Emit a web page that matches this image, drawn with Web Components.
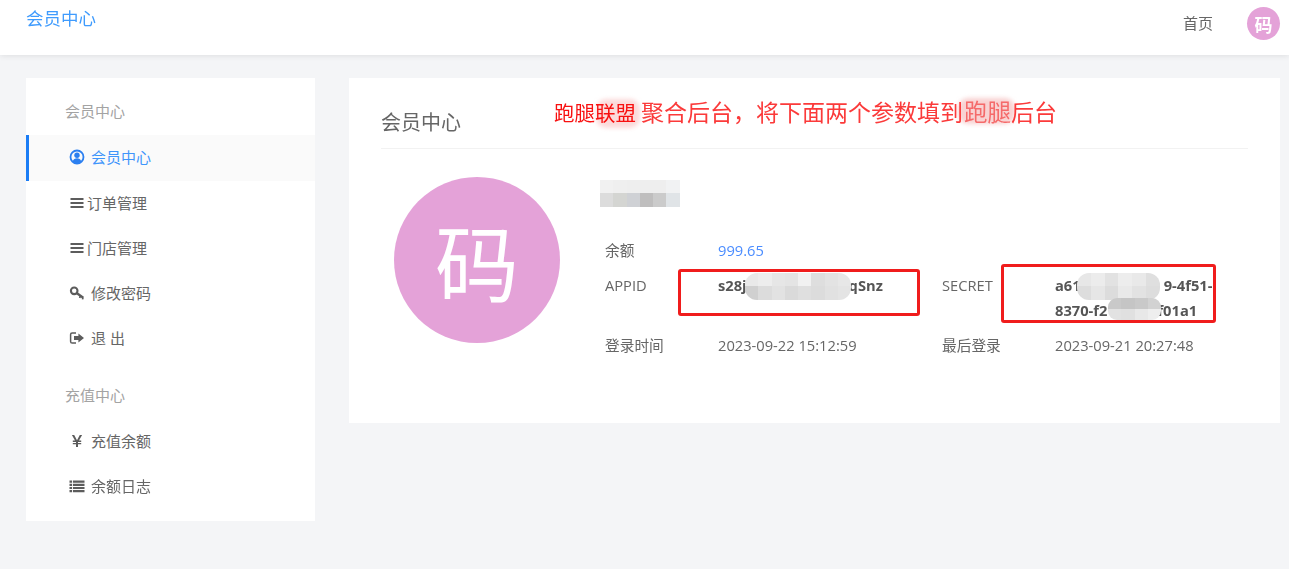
<!DOCTYPE html>
<html lang="zh-CN"><head><meta charset="utf-8"><title>会员中心</title>
<style>
html,body{margin:0;height:569px;overflow:hidden}
body{background:#f4f5f7;font-family:"Open Sans","Noto Sans CJK SC",sans-serif;color:#666;position:relative}
.page{display:flex;flex-direction:column;height:569px;filter:blur(.35px)}
.content{display:flex;gap:34px;padding:23px 9px 0 26px;align-items:flex-start}
</style></head><body>
<div class="page">
<app-header></app-header>
<div class="content">
<side-menu>
  <menu-title>会员中心</menu-title>
  <menu-item icon="user" active>会员中心</menu-item>
  <menu-item icon="bars" tight>订单管理</menu-item>
  <menu-item icon="bars" tight>门店管理</menu-item>
  <menu-item icon="key">修改密码</menu-item>
  <menu-item icon="out">退 出</menu-item>
  <menu-title second>充值中心</menu-title>
  <menu-item icon="yen">充值余额</menu-item>
  <menu-item icon="list">余额日志</menu-item>
</side-menu>
<member-card></member-card>
</div>
</div>
<note-layer></note-layer>
<script>
const CJK='"Noto Sans CJK SC"';
const ICONS={
 user:'<circle cx="8" cy="8" r="6.5" fill="none" stroke="currentColor" stroke-width="1.8"/><circle cx="8" cy="6.2" r="2.7" fill="currentColor"/><path d="M3.6 12.4c.8-2.4 2.4-3.2 4.4-3.2s3.6.8 4.4 3.2c-1.1 1.2-2.7 1.8-4.4 1.8s-3.3-.6-4.4-1.8z" fill="currentColor"/>',
 bars:'<path d="M1.5 3h13v2h-13zM1.5 7h13v2h-13zM1.5 11h13v2h-13z" fill="currentColor"/>',
 key:'<circle cx="5.2" cy="5.8" r="3.3" fill="none" stroke="currentColor" stroke-width="2.1"/><path d="M7.6 8 14.3 12.8" fill="none" stroke="currentColor" stroke-width="2.3"/><path d="M11.5 10.5 10.7 13M14 12.5 13.5 14.4" fill="none" stroke="currentColor" stroke-width="1.7"/>',
 out:'<path fill="none" stroke="currentColor" stroke-width="1.5" d="M7 3H3.2C2.2 3 1.6 3.7 1.6 4.6v6.8c0 .9.6 1.6 1.6 1.6H7"/><path fill="currentColor" d="M9.4 3.4 15 8l-5.6 4.6V10H5V6h4.4z"/>',
 yen:'<path fill="currentColor" d="M2.9 2h2.3l2.8 5.2L10.8 2h2.3L10 7.6h2.2v1.3H9v1.1h3.2v1.3H9V14H7v-2.7H3.8V10H7V8.9H3.8V7.6H6z"/>',
 list:'<path fill="currentColor" d="M.5 2.5h2.6v2.2H.5zM4 2.5h11.500v2.200H4zM.5 5.700h2.600v2.200H.5zM4 5.700h11.500v2.200H4zM.5 8.900h2.600v2.200H.5zM4 8.900h11.500v2.200H4zM.5 12.100h2.600v2.200H.5zM4 12.100h11.500v2.200H4z"/>'
};

const def=(name,html)=>customElements.define(name,class extends HTMLElement{
  connectedCallback(){ if(this.shadowRoot) return;
    const r=this.attachShadow({mode:'open'});
    r.innerHTML=typeof html==='function'?html(this):html;
  }
});

def('app-icon',el=>`<style>:host{display:inline-flex;width:16px;height:16px;color:inherit}svg{width:16px;height:16px;display:block}</style><svg viewBox="0 0 16 16">${ICONS[el.getAttribute('name')]||''}</svg>`);

def('letter-avatar',el=>{const s=+el.getAttribute('size'),f=+el.getAttribute('font'),w=el.getAttribute('weight')||400;
  return `<style>:host{display:flex;flex:none;width:${s}px;height:${s}px;border-radius:50%;background:#e4a2d8;color:#fff;align-items:center;justify-content:center;font:${w} ${f}px/1 ${CJK},sans-serif}</style><span>码</span>`});

def('app-header',`<style>
:host{display:flex;flex:none;height:55px;box-sizing:border-box;background:#fff;box-shadow:0 1px 6px rgba(0,0,0,.09);justify-content:space-between;padding:0 9px 0 26px;position:relative}
.logo{font-size:17.5px;line-height:36px;color:#3f9bfd}
.right{display:flex;align-items:flex-start;gap:33px}
.home{font-size:15px;line-height:46px;color:#666;width:31px;white-space:nowrap}
letter-avatar{margin-top:7px}
</style><div class="logo">会员中心</div><div class="right"><div class="home">首页</div><letter-avatar size="33" font="18" weight="700"></letter-avatar></div>`);

def('side-menu',`<style>:host{display:block;flex:none;width:289px;height:443px;box-sizing:border-box;background:#fff;padding:12px 0}</style><slot></slot>`);

def('menu-title',el=>{const s=el.hasAttribute('second');return `<style>:host{display:block;height:45px;line-height:${s?45:43}px;padding-left:39px;font-size:15px;color:#a3a3a3;${s?'margin-top:13px;':''}}</style><slot></slot>`});

def('menu-item',el=>{const active=el.hasAttribute('active'),tight=el.hasAttribute('tight');
  return `<style>:host{display:flex;align-items:center;height:45px;box-sizing:border-box;padding:0 0 ${active?3:0}px ${active?40:43}px;font-size:15px;color:${active?'#3f95fb':'#666'};${active?'background:#fafafa;border-left:3px solid #1a7cf5;height:46px;margin-bottom:-1px;':''}}
  app-icon{margin-right:${tight?2:6}px;color:${active?'#2b7ff0':'#5c5c5c'}}</style><app-icon name="${el.getAttribute('icon')}"></app-icon><slot></slot>`});

def('mosaic-patch',el=>{
  const rows=el.getAttribute('cells').split('|').map(r=>r.split(','));
  const cw=+(el.getAttribute('cell')||13.3);
  const h=rows.map(r=>r.map(c=>`<i style="width:${cw}px;background:#${c}"></i>`).join('')).join('<br>');
  const st=`:host{display:block;width:max-content;line-height:0;overflow:hidden;border-radius:${el.getAttribute('radius')||0}px;filter:blur(.6px);flex:none}i{display:inline-block;height:${el.getAttribute('rowh')||13.3}px}`;
  return `<style>${st}</style>${h}`});

def('info-grid',`<style>:host{display:grid;grid-template-columns:113px 224px 113px 170px;row-gap:10px;margin:31px 0 0 5px;font-size:14.7px;line-height:25px;color:#666}
.blue{color:#4a8cff}
b{font-weight:700;color:#555}
i{display:inline-block}
span{white-space:nowrap}
</style>
<span>余额</span><span class="blue" style="grid-column:2/5">999.65</span>
<span>APPID</span><span><b>s28j<i style="width:102px"></i>qSnz</b></span>
<span>SECRET</span><span><b>a61<i style="width:83px"></i>9-4f51-<br>8370-f2<i style="width:50px"></i>f01a1</b></span>
<span>登录时间</span><span>2023-09-22 15:12:59</span>
<span>最后登录</span><span>2023-09-21 20:27:48</span>`);

def('member-card',`<style>
:host{display:block;flex:1;height:345px;box-sizing:border-box;background:#fff;padding:0 32px}
h2{margin:0;height:71px;box-sizing:border-box;border-bottom:1px solid #f2f2f2;font-size:20px;font-weight:400;line-height:90px;color:#666}
.body{display:flex;padding:28px 0 0 13px;gap:40px}
</style>
<h2>会员中心</h2>
<div class="body"><letter-avatar size="166" font="84"></letter-avatar>
<div class="info"><mosaic-patch style="margin-top:3px" cells="f1f1f1,efefef,eeeeee,eeeeee,eeeeee,f1f2f3|dcdcdc,d4d5d2,cfd1d5,bfbebe,cbcbcb,e0e4e7"></mosaic-patch>
<info-grid></info-grid></div></div>`);

def('note-box',el=>`<style>:host{position:absolute;left:${el.getAttribute('x')}px;top:${el.getAttribute('y')}px;width:${el.getAttribute('w')}px;height:${el.getAttribute('h')}px;box-sizing:border-box;border:3px solid #f01c1c;border-radius:3px}</style>`);

def('note-smudge',el=>`<style>:host{position:absolute;left:${el.getAttribute('x')}px;top:${el.getAttribute('y')}px;width:${el.getAttribute('w')}px;height:${el.getAttribute('h')}px;background:${el.getAttribute('c')};border-radius:10px;filter:blur(2px)}</style>`);

def('note-layer',`<style>
:host{position:absolute;inset:0;pointer-events:none;font-family:${CJK},sans-serif;filter:blur(.3px)}
.t{position:absolute;left:554px;top:96px;white-space:nowrap;line-height:30px;color:#fb3a3a;font-size:23px}
.s{font-size:20.5px;color:#f81010}
.m{margin-right:5px}
.f{font-size:23.5px;color:#f56a6a;margin-left:1px}
</style>
<note-smudge x="596" y="99" w="44" h="29" c="#fbdada"></note-smudge>
<note-smudge x="958" y="98" w="57" h="26" c="#f8d2d2"></note-smudge>
<div class="t"><span class="s m">跑腿联盟</span>聚合后台，将下面两个参数填到<span class="f">跑腿</span>后台</div>
<note-box x="678" y="269" w="242" h="47"></note-box>
<note-box x="1001" y="264" w="215" h="59"></note-box>
<mosaic-patch radius="12" style="position:absolute;left:745px;top:273px" cells="e9e9e9,ededed,e6e6e6,e4e4e4,f1f1f1,dedede,e3e3e3,e7e7e7|d0d0d0,dcdcdc,e2e2e2,dadada,dfdfdf,dcdcdc,e1e1e1,e4e4e4"></mosaic-patch>
<mosaic-patch radius="12" cell="13.8" style="position:absolute;left:1077px;top:273px" cells="e7e7e7,ececec,e2e2e2,ededed,e9e9e9,dfdfdf|dddddd,e6e6e6,dcdcdc,e9e9e9,e2e2e2,dddddd"></mosaic-patch>
<mosaic-patch radius="9" rowh="11" style="position:absolute;left:1108px;top:298px" cells="c9c9c9,c5c5c5,c9c9c9,d2d2d2|e2e2e2,e0e0e0,e8e8e8,eeeeee"></mosaic-patch>`);
</script>
</body></html>
